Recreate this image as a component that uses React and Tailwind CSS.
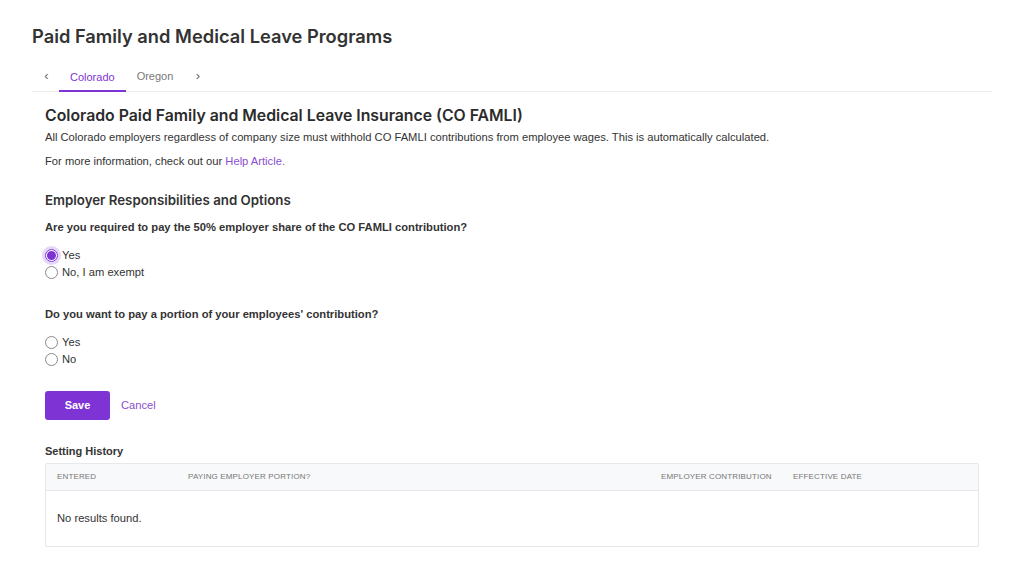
import React, { useState } from 'react';

const headingFont = { fontFamily: 'Inter, "Liberation Sans", sans-serif' };

const Radio = ({ name, value, checked, onChange, label }) => (
  <label className="flex items-center gap-[4px] h-[17px] text-[11.2px] text-[#333] cursor-pointer">
    <span
      className={`flex items-center justify-center w-[13px] h-[13px] rounded-full border ${
        checked ? 'border-[#7e33d4] ring-[3px] ring-[#e6d6f7]' : 'border-[#8a8a8a] bg-white'
      }`}
    >
      {checked && <span className="w-[9px] h-[9px] rounded-full bg-[#7e33d4]" />}
    </span>
    <input type="radio" name={name} value={value} checked={checked} onChange={onChange} className="hidden" />
    {label}
  </label>
);

const App = () => {
  const [required, setRequired] = useState('yes');
  const [portion, setPortion] = useState('');

  return (
    <div className="min-h-screen bg-white px-8 pt-[25px]" style={{ fontFamily: '"Liberation Sans", Arial, sans-serif' }}>
      <h1 className="text-[18.3px] font-semibold text-[#333] leading-[22px]" style={headingFont}>
        Paid Family and Medical Leave Programs
      </h1>

      {/* tabs */}
      <div className="mt-[17px] flex items-end border-b border-[#ececec] text-[11px]">
        <button className="w-[27px] h-[27px] text-[#666] text-[13px] pb-[3px] pl-[2px]">‹</button>
        <button className="h-[27px] px-[11px] text-[#7e33d4] border-b-2 border-[#7e33d4] mb-[-1px] pb-[1px]">Colorado</button>
        <button className="h-[27px] px-[11px] text-[#777] pb-[3px]">Oregon</button>
        <button className="w-[27px] h-[27px] text-[#666] text-[13px] pb-[3px]">›</button>
      </div>

      <div className="px-[13px] max-w-[960px]">
        <h2 className="mt-[14px] text-[15.8px] font-semibold text-[#2b2b2b] leading-[20px]" style={headingFont}>
          Colorado Paid Family and Medical Leave Insurance (CO FAMLI)
        </h2>
        <p className="mt-[4px] text-[11.2px] text-[#333] leading-[14px]">
          All Colorado employers regardless of company size must withhold CO FAMLI contributions from employee wages. This is automatically calculated.
        </p>
        <p className="mt-[10px] text-[11.2px] text-[#333] leading-[14px]">
          For more information, check out our <a href="#" className="text-[#8a4fd0]">Help Article.</a>
        </p>

        <h3 className="mt-[23px] text-[13.3px] font-semibold text-[#333] leading-[18px]" style={headingFont}>
          Employer Responsibilities and Options
        </h3>
        <p className="mt-[11px] text-[11.2px] font-bold text-[#333] leading-[14px]">
          Are you required to pay the 50% employer share of the CO FAMLI contribution?
        </p>
        <div className="mt-[13px] flex flex-col">
          <Radio name="req" value="yes" checked={required === 'yes'} onChange={() => setRequired('yes')} label="Yes" />
          <Radio name="req" value="no" checked={required === 'no'} onChange={() => setRequired('no')} label="No, I am exempt" />
        </div>

        <p className="mt-[26px] text-[11.2px] font-bold text-[#333] leading-[14px]">
          Do you want to pay a portion of your employees' contribution?
        </p>
        <div className="mt-[13px] flex flex-col">
          <Radio name="portion" value="yes" checked={portion === 'yes'} onChange={() => setPortion('yes')} label="Yes" />
          <Radio name="portion" value="no" checked={portion === 'no'} onChange={() => setPortion('no')} label="No" />
        </div>

        <div className="mt-[23px] flex items-center gap-[11px]">
          <button className="w-[65px] h-[29px] rounded-[3px] bg-[#7e33d4] text-white text-[11px] font-bold">Save</button>
          <button className="text-[11.2px] text-[#8a4fd0]">Cancel</button>
        </div>

        <h4 className="mt-[24px] text-[11px] font-bold text-[#333] leading-[14px]">Setting History</h4>
        <div className="mt-[5px] border border-[#e6e8eb] rounded-[2px]">
          <div className="grid grid-cols-[131px_473px_132px_1fr] h-[27px] items-center px-[11px] bg-[#f8f9fa] border-b border-[#e6e8eb] text-[8px] tracking-[0.15px] text-[#777] uppercase">
            <span>Entered</span>
            <span>Paying Employer Portion?</span>
            <span>Employer Contribution</span>
            <span>Effective Date</span>
          </div>
          <div className="h-[55px] flex items-center px-[11px] text-[11.2px] text-[#333]">No results found.</div>
        </div>
      </div>
    </div>
  );
};

export default App;
